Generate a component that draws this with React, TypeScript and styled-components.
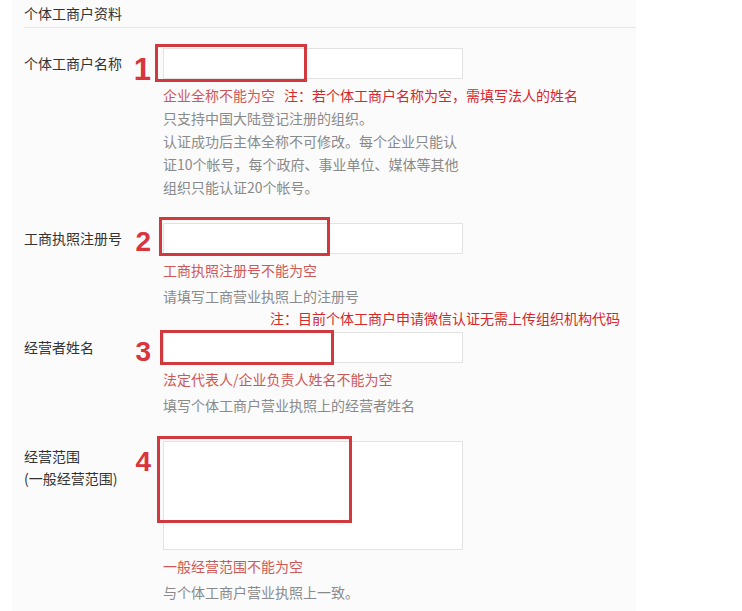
import React from 'react';
import styled, { createGlobalStyle } from 'styled-components';

const GlobalStyle = createGlobalStyle`
  body {
    margin: 0;
    background: #ffffff;
    font-family: "Noto Sans CJK SC", "Noto Sans", sans-serif;
  }
`;

const Panel = styled.div`
  width: 624px;
  margin-left: 12px;
  padding: 0 0 8px 12px;
  box-sizing: border-box;
  background: #fbfbfb;
  font-size: 14px;
  color: #333;
`;

const Header = styled.div`
  height: 28px;
  padding-top: 2px;
  box-sizing: border-box;
  line-height: 22px;
  border-bottom: 1px solid #e6e6e6;
  color: #333;
`;

const Row = styled.div<{ $top?: number }>`
  display: grid;
  grid-template-columns: 109px 30px 300px;
  margin-top: ${p => p.$top ?? 24}px;
`;

const Label = styled.div`
  padding-top: 4px;
  line-height: 22px;
  color: #333;
  white-space: nowrap;
`;

const Marker = styled.div<{ $offset: number; $size: number }>`
  margin-top: ${p => p.$offset}px;
  height: 31px;
  line-height: 31px;
  padding-right: 12px;
  text-align: right;
  font-family: "Liberation Sans", Arial, sans-serif;
  font-size: ${p => p.$size}px;
  font-weight: 700;
  color: #d8353c;
`;

const Field = styled.div`
  position: relative;
`;

const Box = styled.div<{ $height: number }>`
  height: ${p => p.$height}px;
  box-sizing: border-box;
  border: 1px solid #e2e2e2;
  background: #ffffff;
`;

const Highlight = styled.div`
  position: absolute;
  box-sizing: border-box;
  border: 3px solid #d0393e;
`;

const ErrorLine = styled.div`
  margin-top: 5px;
  line-height: 23px;
  color: #cf5856;
  white-space: nowrap;
`;

const Note = styled.span`
  margin-left: 9px;
  color: #d7262c;
`;

const FloatingNote = styled.div`
  position: absolute;
  line-height: 23px;
  color: #d7262c;
  white-space: nowrap;
`;

const Hint = styled.div<{ $gap: number }>`
  margin-top: ${p => p.$gap}px;
  line-height: 23px;
  color: #8a8a8a;
`;

const HintLine = styled.div`
  white-space: nowrap;
`;

type Rect = { left: number; top: number; width: number; height: number };

interface FieldRowProps {
  label: string[];
  index: number;
  markerOffset: number;
  markerSize?: number;
  boxHeight: number;
  rect: Rect;
  error: string;
  note?: string;
  hint: string[];
  hintGap: number;
  top?: number;
  children?: React.ReactNode;
}

const FieldRow: React.FC<FieldRowProps> = ({
  label, index, markerOffset, markerSize = 28, boxHeight, rect, error, note, hint, hintGap, top, children,
}) => (
  <Row $top={top}>
    <Label>
      {label.map(l => <div key={l}>{l}</div>)}
    </Label>
    <Marker $offset={markerOffset} $size={markerSize}>{index}</Marker>
    <Field>
      <Box $height={boxHeight} />
      <Highlight style={{ left: rect.left, top: rect.top, width: rect.width, height: rect.height }} />
      <ErrorLine>
        {error}
        {note && <Note>{note}</Note>}
      </ErrorLine>
      <Hint $gap={hintGap}>
        {hint.map(h => <HintLine key={h}>{h}</HintLine>)}
      </Hint>
      {children}
    </Field>
  </Row>
);

export default function App() {
  return (
    <>
      <GlobalStyle />
      <Panel>
        <Header>个体工商户资料</Header>

        <FieldRow
          top={20}
          label={['个体工商户名称']}
          index={1}
          markerOffset={6}
          markerSize={31}
          boxHeight={31}
          rect={{ left: -8, top: -4, width: 152, height: 38 }}
          error="企业全称不能为空"
          note="注：若个体工商户名称为空，需填写法人的姓名"
          hintGap={0}
          hint={[
            '只支持中国大陆登记注册的组织。',
            '认证成功后主体全称不可修改。每个企业只能认',
            '证10个帐号，每个政府、事业单位、媒体等其他',
            '组织只能认证20个帐号。',
          ]}
        />

        <FieldRow
          label={['工商执照注册号']}
          index={2}
          markerOffset={3}
          boxHeight={31}
          rect={{ left: -4, top: -6, width: 171, height: 39 }}
          error="工商执照注册号不能为空"
          hintGap={3}
          hint={['请填写工商营业执照上的注册号']}
        >
          <FloatingNote style={{ left: 107, top: 84 }}>
            注：目前个体工商户申请微信认证无需上传组织机构代码
          </FloatingNote>
        </FieldRow>

        <FieldRow
          label={['经营者姓名']}
          index={3}
          markerOffset={4}
          boxHeight={31}
          rect={{ left: -3, top: -2, width: 174, height: 35 }}
          error="法定代表人/企业负责人姓名不能为空"
          hintGap={3}
          hint={['填写个体工商户营业执照上的经营者姓名']}
        />

        <FieldRow
          label={['经营范围', '(一般经营范围)']}
          index={4}
          markerOffset={5}
          boxHeight={109}
          rect={{ left: -6, top: -5, width: 195, height: 87 }}
          error="一般经营范围不能为空"
          hintGap={3}
          hint={['与个体工商户营业执照上一致。']}
        />
      </Panel>
    </>
  );
}
